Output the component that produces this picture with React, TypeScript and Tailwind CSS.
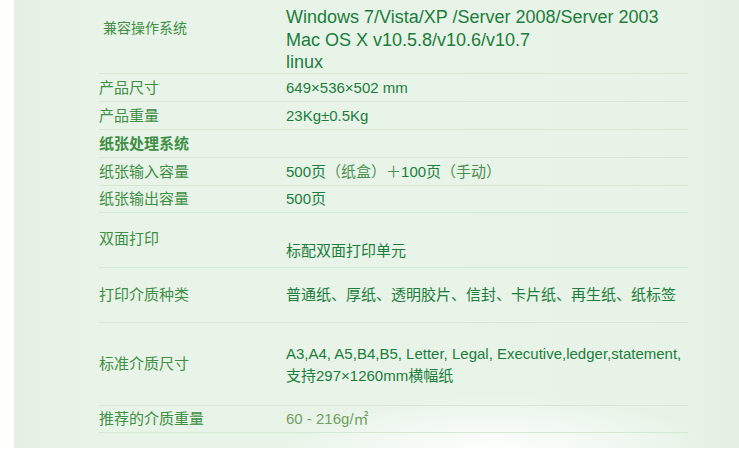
import React from "react";

const font = { fontFamily: '"Liberation Sans", "Noto Sans CJK SC", Arial, sans-serif' };

function Row({
  label,
  children,
  h,
  labelCls = "",
  valueCls = "",
  align = "items-center",
}: {
  label: React.ReactNode;
  children?: React.ReactNode;
  h: string;
  labelCls?: string;
  valueCls?: string;
  align?: string;
}) {
  return (
    <div className={`flex ${align} ${h} border-b border-[#d3e9d3]`}>
      <div className={`w-[187px] shrink-0 text-[15px] leading-[20px] text-[#3f8f45] ${labelCls}`}>{label}</div>
      <div className={`flex-1 text-[15px] leading-[20px] text-[#1c7d3c] ${valueCls}`}>{children}</div>
    </div>
  );
}

export default function App() {
  return (
    <div className="w-[739px] h-[450px] bg-white overflow-hidden" style={font}>
      <div className="relative ml-[14px] w-[725px] h-[448px] overflow-hidden bg-[linear-gradient(90deg,#e4f0e4_0%,#e9f4e9_10%,#e8f4e8_60%,#e7f3e7_92%,#e2efe2_100%)]">
        <div className="absolute left-[260px] bottom-[-55px] w-[440px] h-[110px] rounded-full bg-[radial-gradient(ellipse_at_center,rgba(255,255,255,0.9)_0%,rgba(255,255,255,0)_70%)]" />
        <div className="relative pl-[85px] pt-[6px] w-[674px]">
          <div className="flex items-start h-[68px] border-b border-[#d3e9d3]">
            <div className="w-[187px] shrink-0 pl-[4px] pt-[12px] text-[14px] leading-[20px] text-[#3f8f45]">兼容操作系统</div>
            <div className="flex-1 text-[18px] leading-[22.5px] text-[#1c7d3c]">
              <div>Windows 7/Vista/XP /Server 2008/Server 2003</div>
              <div>Mac OS X v10.5.8/v10.6/v10.7</div>
              <div>linux</div>
            </div>
          </div>
          <Row label="产品尺寸" h="h-[28px]">649×536×502 mm</Row>
          <Row label="产品重量" h="h-[28px]">23Kg±0.5Kg</Row>
          <Row label="纸张处理系统" h="h-[28px]" labelCls="font-bold text-[#1d6e2a]" />
          <Row label="纸张输入容量" h="h-[28px]">
            500页<span className="text-[#4a8f4e]">（纸盒）＋</span>100页<span className="text-[#4a8f4e]">（手动）</span>
          </Row>
          <Row label="纸张输出容量" h="h-[27px]">500页</Row>
          <div className="flex items-start h-[55px] border-b border-[#d3e9d3]">
            <div className="w-[187px] shrink-0 pt-[16px] text-[15px] leading-[20px] text-[#3f8f45]">双面打印</div>
            <div className="flex-1 pt-[28px] text-[15px] leading-[20px] text-[#1c7d3c]">标配双面打印单元</div>
          </div>
          <Row label="打印介质种类" h="h-[55px]">普通纸、厚纸、透明胶片、信封、卡片纸、再生纸、纸标签</Row>
          <div className="flex items-center h-[83px] border-b border-[#d3e9d3]">
            <div className="w-[187px] shrink-0 text-[15px] leading-[20px] text-[#3f8f45]">标准介质尺寸</div>
            <div className="flex-1 pt-[2px] text-[15px] leading-[22px] text-[#1c7d3c]">
              <div>A3,A4, A5,B4,B5, Letter, Legal, Executive,ledger,statement,</div>
              <div>支持297×1260mm横幅纸</div>
            </div>
          </div>
          <Row label="推荐的介质重量" h="h-[27px]" valueCls="text-[#6f9f5f]">
            60 - 216g/㎡
          </Row>
        </div>
      </div>
    </div>
  );
}
